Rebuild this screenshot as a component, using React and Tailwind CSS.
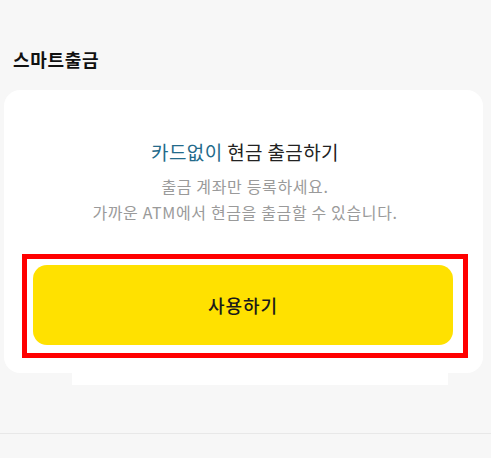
import React from 'react';

function App() {
  return (
    <div className="w-[491px] h-[458px] bg-[#f7f7f7] overflow-hidden" style={{ fontFamily: '"Noto Sans CJK KR", "Noto Sans", sans-serif' }}>
      <div className="pt-[46px] px-[13px]">
        <h2 className="text-[18px] font-bold text-[#111] leading-[26px] tracking-[0.04em]">스마트출금</h2>
      </div>

      <div className="mt-[18px] mx-[4px] w-[479px]">
        <div className="bg-white rounded-[16px] pt-[48px] pb-[15px] pl-[18px] pr-[15px]">
          <p className="text-center text-[19px] leading-[28px] text-[#222] tracking-[0.02em]">
            <span className="text-[#236a8a]">카드없이</span> 현금 출금하기
          </p>
          <div className="mt-[7px] text-center text-[16px] leading-[26px] text-[#9a9a9a] tracking-[0.04em]">
            <p>출금 계좌만 등록하세요.</p>
            <p>가까운 ATM에서 현금을 출금할 수 있습니다.</p>
          </div>

          <div className="mt-[29px] border-[5px] border-[#ff0000] pt-[6px] pb-[8px] pl-[6px] pr-[10px]">
            <button className="w-full h-[80px] rounded-[14px] bg-[#ffe100] text-[18px] font-medium text-[#1a1a1a] tracking-[0.05em]">
              사용하기
            </button>
          </div>
        </div>
        <div className="ml-[68px] w-[376px] h-[12px] bg-white"></div>
      </div>

      <div className="mt-[48px] border-t border-[#e8e8e8]"></div>
    </div>
  );
}

export default App;
